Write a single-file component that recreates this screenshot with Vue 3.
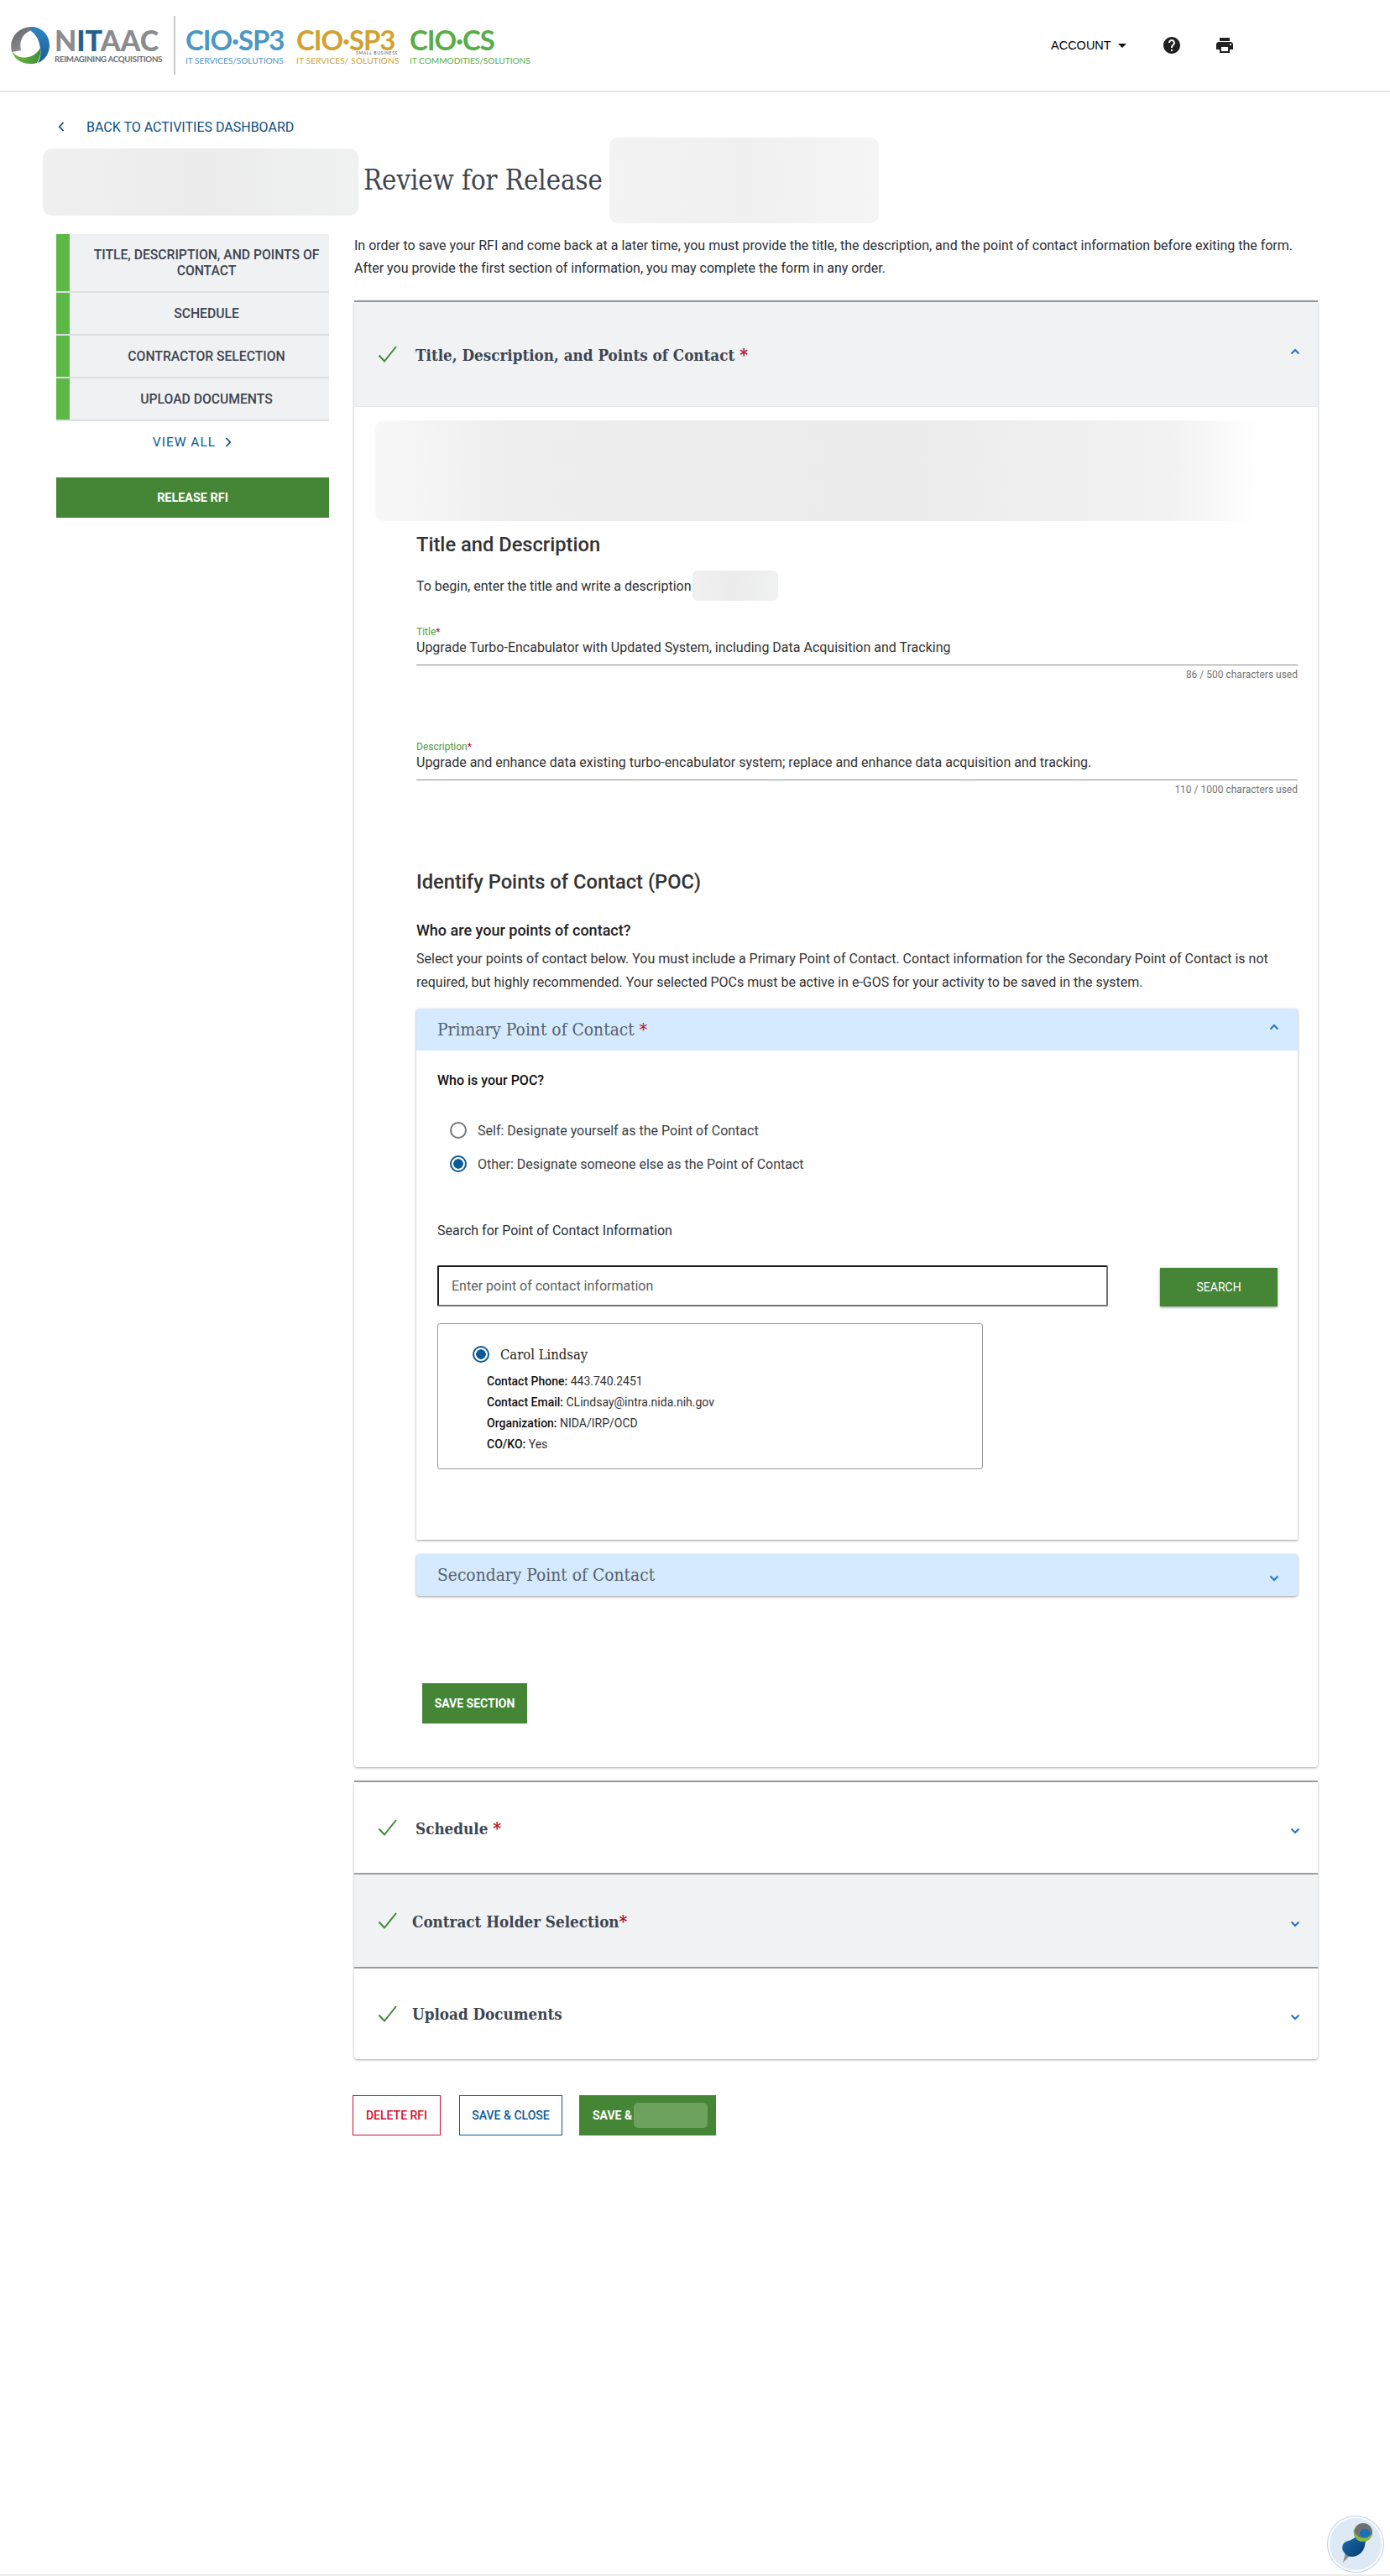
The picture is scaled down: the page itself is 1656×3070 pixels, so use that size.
<template>
  <div class="page">
    <header class="topbar">
      <div class="logo">
        <svg class="swirl" viewBox="0 0 46 44" width="46" height="44">
          <defs>
            <linearGradient id="swGrey" x1="0" y1="0" x2="1" y2="1">
              <stop offset="0" stop-color="#5f6062" />
              <stop offset="1" stop-color="#a5a6a8" />
            </linearGradient>
            <linearGradient id="swBlue" x1="0" y1="0" x2="0" y2="1">
              <stop offset="0" stop-color="#2f86c4" />
              <stop offset="1" stop-color="#1c5d92" />
            </linearGradient>
            <linearGradient id="swGreen" x1="0" y1="0" x2="1" y2="0">
              <stop offset="0" stop-color="#78b944" />
              <stop offset="1" stop-color="#3f8f3a" />
            </linearGradient>
          </defs>
          <path d="M1 30C-3 13 9 0 25 0c3 0 7 1 10 3-9-1-18 3-22 11-2 5-2 9-1 14z" fill="url(#swGrey)" />
          <path d="M22 0c14-1 24 9 24 22 0 10-6 18-14 21 3-5 4-11 3-17-1-9-4-16-11-21-1-2-1-4-2-5z" fill="url(#swBlue)" />
          <path d="M1 28c5 9 15 10 23 7 5-2 9-6 11-10 1 7-1 13-4 18-3 1-5 1-8 1C12 44 3 38 1 28z" fill="url(#swGreen)" />
          <ellipse cx="21.5" cy="22" rx="9.5" ry="10" fill="#fff" />
        </svg>
        <div class="nitaac">
          <span class="nitaac-name">N<b>IT</b>AAC</span>
          <span class="nitaac-tag">REIMAGINING ACQUISITIONS</span>
        </div>
        <span class="logo-rule"></span>
        <div v-for="b in brands" :key="b.sub" class="brand" :class="b.cls">
          <span class="brand-name">{{ b.name }}</span>
          <span v-if="b.small" class="brand-small">SMALL BUSINESS</span>
          <span class="brand-sub">{{ b.sub }}</span>
        </div>
      </div>
      <nav class="topnav">
        <span class="account">ACCOUNT</span>
        <span class="caret"></span>
        <svg class="help" viewBox="0 0 24 24" width="24" height="24"><path d="M12 2C6.48 2 2 6.48 2 12s4.48 10 10 10 10-4.48 10-10S17.52 2 12 2zm1 17h-2v-2h2v2zm2.07-7.75l-.9.92C13.45 12.9 13 13.5 13 15h-2v-.5c0-1.1.45-2.1 1.17-2.83l1.24-1.26c.37-.36.59-.86.59-1.41 0-1.1-.9-2-2-2s-2 .9-2 2H8c0-2.21 1.79-4 4-4s4 1.79 4 4c0 .88-.36 1.68-.93 2.25z" /></svg>
        <svg class="print" viewBox="0 0 24 24" width="24" height="24"><path d="M19 8H5c-1.66 0-3 1.34-3 3v6h4v4h12v-4h4v-6c0-1.66-1.34-3-3-3zm-3 11H8v-5h8v5zm3-7c-.55 0-1-.45-1-1s.45-1 1-1 1 .45 1 1-.45 1-1 1zm-1-9H6v4h12V3z" /></svg>
      </nav>
    </header>

    <a class="back">
      <svg viewBox="0 0 10 14" width="10" height="14"><path d="M7.5 2L2.8 7l4.7 5" fill="none" stroke="#0b4f85" stroke-width="1.8" /></svg>
      <span>BACK TO ACTIVITIES DASHBOARD</span>
    </a>

    <div class="title-row">
      <div class="blur blur-left"></div>
      <h1>Review for Release</h1>
      <div class="blur blur-right"></div>
    </div>

    <div class="columns">
      <aside class="sidebar">
        <div v-for="item in navItems" :key="item.label" class="nav-item" :class="{tall: item.tall}">
          <span>{{ item.label }}</span>
        </div>
        <a class="view-all">
          <span>VIEW ALL</span>
          <svg viewBox="0 0 10 14" width="10" height="14"><path d="M2.5 2l4.7 5-4.7 5" fill="none" stroke="#0b4f85" stroke-width="1.8" /></svg>
        </a>
        <button class="btn-green release">RELEASE RFI</button>
      </aside>

      <main class="content">
        <p class="intro">
          In order to save your RFI and come back at a later time, you must provide the title, the description, and the point of contact information before exiting the form.<br />
          After you provide the first section of information, you may complete the form in any order.
        </p>

        <section class="card">
          <div class="acc-head open">
            <svg class="check" viewBox="0 0 24 22" width="24" height="22"><path d="M1.5 12.5l6.5 7L22 2" fill="none" stroke="#43863a" stroke-width="2" /></svg>
            <h2 class="acc-title first">Title, Description, and Points of Contact <em>*</em></h2>
            <svg class="chev up" viewBox="0 0 12 8" width="12" height="8"><path d="M1.5 6.5L6 2l4.5 4.5" fill="none" stroke="#2176c7" stroke-width="2" /></svg>
          </div>

          <div class="blur blur-notice"></div>

          <div class="form">
            <h3 class="h-lg">Title and Description</h3>
            <div class="begin">
              <span>To begin, enter the title and write a description</span>
              <div class="blur blur-inline"></div>
            </div>

            <div class="field first-field">
              <label>Title<em>*</em></label>
              <div class="value">Upgrade Turbo-Encabulator with Updated System, including Data Acquisition and Tracking</div>
              <div class="counter">86 / 500 characters used</div>
            </div>
            <div class="field second-field">
              <label>Description<em>*</em></label>
              <div class="value">Upgrade and enhance data existing turbo-encabulator system; replace and enhance data acquisition and tracking.</div>
              <div class="counter">110 / 1000 characters used</div>
            </div>

            <h3 class="h-lg poc-title">Identify Points of Contact (POC)</h3>
            <h4 class="h-md">Who are your points of contact?</h4>
            <p class="poc-text">
              Select your points of contact below. You must include a Primary Point of Contact. Contact information for the Secondary Point of Contact is not required, but highly recommended. Your selected POCs must be active in e-GOS for your activity to be saved in the system.
            </p>

            <div class="panel">
              <div class="panel-head">
                <span>Primary Point of Contact <em>*</em></span>
                <svg class="chev up" viewBox="0 0 12 8" width="12" height="8"><path d="M1.5 6.5L6 2l4.5 4.5" fill="none" stroke="#2176c7" stroke-width="2" /></svg>
              </div>
              <div class="panel-body">
                <div class="who">Who is your POC?</div>
                <div class="radio-row first-radio">
                  <span class="radio"></span>
                  <span>Self: Designate yourself as the Point of Contact</span>
                </div>
                <div class="radio-row">
                  <span class="radio on"></span>
                  <span>Other: Designate someone else as the Point of Contact</span>
                </div>
                <div class="search-label">Search for Point of Contact Information</div>
                <div class="search-row">
                  <div class="search-input">Enter point of contact information</div>
                  <button class="btn-green search">SEARCH</button>
                </div>
                <div class="contact">
                  <div class="contact-name">
                    <span class="radio on"></span>
                    <span>Carol Lindsay</span>
                  </div>
                  <div v-for="row in contactRows" :key="row.k" class="contact-row">
                    <b>{{ row.k }}:</b> {{ row.v }}
                  </div>
                </div>
              </div>
            </div>

            <div class="panel-head closed">
              <span>Secondary Point of Contact</span>
              <svg class="chev down" viewBox="0 0 12 8" width="12" height="8"><path d="M1.5 1.5L6 6l4.5-4.5" fill="none" stroke="#2176c7" stroke-width="2" /></svg>
            </div>

            <button class="btn-green save-section">SAVE SECTION</button>
          </div>
        </section>

        <section class="card rows">
          <div v-for="s in sections" :key="s.title" class="acc-head" :class="s.cls">
            <svg class="check" viewBox="0 0 24 22" width="24" height="22"><path d="M1.5 12.5l6.5 7L22 2" fill="none" stroke="#43863a" stroke-width="2" /></svg>
            <h2 class="acc-title">{{ s.title }}<em v-if="s.star">{{ s.star }}</em></h2>
            <svg class="chev down" viewBox="0 0 12 8" width="12" height="8"><path d="M1.5 1.5L6 6l4.5-4.5" fill="none" stroke="#2176c7" stroke-width="2" /></svg>
          </div>
        </section>

        <div class="actions">
          <button class="btn-line red">DELETE RFI</button>
          <button class="btn-line blue">SAVE &amp; CLOSE</button>
          <button class="btn-green save-next"><span>SAVE &amp;</span><i class="blur-btn"></i></button>
        </div>
      </main>
    </div>

    <div class="pin">
      <svg viewBox="0 0 68 68" width="68" height="68">
        <defs>
          <linearGradient id="pinBody" x1="0" y1="0" x2="1" y2="1">
            <stop offset="0" stop-color="#1c6fb3" />
            <stop offset="1" stop-color="#063a6b" />
          </linearGradient>
        </defs>
        <path d="M22 44l-3 12 9-9z" fill="#8f9294" />
        <path d="M35 24l11 6c-1 5-1 8-3 11-3 6-12 10-18 7-6-3-9-10-5-15 3-4 10-2 15-9z" fill="url(#pinBody)" />
        <circle cx="43" cy="20" r="11" fill="#6f7072" />
        <path d="M32 16c0 6 6 11 12 11 4 0 7-2 10-6-1 7-6 10-12 10-7 0-12-8-10-15z" fill="#86bc45" />
        <ellipse cx="45" cy="21" rx="6" ry="5" fill="#1472b8" />
      </svg>
    </div>
  </div>
</template>

<script setup>
const brands = [
  {name: 'CIO·SP3', sub: 'IT SERVICES/SOLUTIONS', cls: 'sp3'},
  {name: 'CIO·SP3', sub: 'IT SERVICES/ SOLUTIONS', cls: 'sb', small: true},
  {name: 'CIO·CS', sub: 'IT COMMODITIES/SOLUTIONS', cls: 'cs'},
];

const navItems = [
  {label: 'TITLE, DESCRIPTION, AND POINTS OF CONTACT', tall: true},
  {label: 'SCHEDULE'},
  {label: 'CONTRACTOR SELECTION'},
  {label: 'UPLOAD DOCUMENTS'},
];

const contactRows = [
  {k: 'Contact Phone', v: '443.740.2451'},
  {k: 'Contact Email', v: 'CLindsay@intra.nida.nih.gov'},
  {k: 'Organization', v: 'NIDA/IRP/OCD'},
  {k: 'CO/KO', v: 'Yes'},
];

const sections = [
  {title: 'Schedule ', star: '*', cls: 'r-schedule'},
  {title: 'Contract Holder Selection', star: '*', cls: 'r-holder'},
  {title: 'Upload Documents', cls: 'r-upload'},
];
</script>

<style>
html,
body {
  margin: 0;
  background: #fff;
}
</style>

<style scoped>
.page {
  position: relative;
  width: 1656px;
  height: 3070px;
  overflow: hidden;
  font-family: Roboto, 'Liberation Sans', sans-serif;
  font-size: 16px;
  color: #3d4551;
  box-sizing: border-box;
  border-bottom: 2px solid #ececec;
}
em {
  font-style: normal;
  color: #b50d2b;
}

/* header */
.topbar {
  height: 108px;
  border-bottom: 2px solid #e3e3e3;
  display: flex;
  align-items: center;
  box-sizing: content-box;
}
.logo {
  display: flex;
  align-items: center;
  padding-left: 13px;
  width: 1239px;
  box-sizing: border-box;
}
.swirl {
  flex: none;
}
.nitaac {
  display: flex;
  flex-direction: column;
  margin-left: 6px;
  width: 128px;
  color: #8a8c8f;
  font-family: Lato, sans-serif;
}
.nitaac-name {
  font-size: 34px;
  line-height: 30px;
  font-weight: 900;
  letter-spacing: 0;
}
.nitaac-name b {
  font-weight: 900;
  color: #235f8f;
}
.nitaac-tag {
  font-size: 9.7px;
  line-height: 12px;
  margin-top: 1px;
  white-space: nowrap;
  font-weight: 700;
  color: #6d6e71;
  letter-spacing: -0.3px;
}
.logo-rule {
  width: 2px;
  height: 70px;
  background: #c9c9c9;
  margin: 0 12px 0 14px;
}
.brand {
  position: relative;
  display: flex;
  flex-direction: column;
  margin-right: 13px;
  font-family: Lato, sans-serif;
  white-space: nowrap;
}
.brand-name {
  font-size: 33px;
  line-height: 34px;
  font-weight: 700;
  letter-spacing: -1.1px;
}
.brand-sub {
  font-size: 10.2px;
  line-height: 12px;
  margin-top: 2px;
  letter-spacing: -0.05px;
}
.brand-small {
  position: absolute;
  right: 1px;
  top: 30px;
  font-size: 5px;
  line-height: 6px;
  letter-spacing: 0.7px;
  color: #555;
}
.sp3 {
  width: 119px;
  color: #4b97c5;
}
.sb {
  width: 122px;
  color: #d1a22f;
}
.sb .brand-sub {
  letter-spacing: 0.1px;
}
.cs {
  color: #57ae47;
}
.topnav {
  display: flex;
  align-items: center;
  color: #000;
}
.account {
  font-family: 'Liberation Sans', sans-serif;
  font-size: 14.5px;
  margin-left: 13px;
}
.caret {
  width: 0;
  height: 0;
  margin: 0 0 0 8px;
  border-left: 5px solid transparent;
  border-right: 5px solid transparent;
  border-top: 5px solid #111;
}
.help {
  margin-left: 42px;
  fill: #212121;
}
.print {
  margin-left: 39px;
  fill: #212121;
}

/* title area */
.back {
  display: flex;
  align-items: center;
  height: 20px;
  margin: 31px 0 0 68px;
  gap: 25px;
  color: #0b4f85;
  font-size: 16px;
}
.title-row {
  display: flex;
  align-items: center;
  height: 102px;
  margin-top: 3px;
  padding-left: 51px;
}
.blur {
  border-radius: 10px;
  background: linear-gradient(90deg, #f0f0f0, #ececec 50%, #f0f1f1);
}
.blur-left {
  width: 376px;
  height: 80px;
  margin-top: 4px;
}
h1 {
  margin: 0 7px 0 6px;
  width: 286px;
  white-space: nowrap;
  font-family: 'DejaVu Serif Condensed', 'DejaVu Serif', serif;
  font-weight: 400;
  font-size: 32.6px;
  color: #3d4551;
}
.blur-right {
  width: 321px;
  height: 102px;
  background: linear-gradient(90deg, #f3f3f3, #f0f0f0 50%, #f5f5f5);
}

/* layout */
.columns {
  display: grid;
  grid-template-columns: 325px 1148px;
  column-gap: 30px;
  padding: 13px 0 0 67px;
}
.nav-item {
  display: flex;
  align-items: center;
  justify-content: center;
  text-align: center;
  height: 49px;
  margin-bottom: 2px;
  padding-left: 18px;
  padding-right: 1px;
  background: #f0f1f3;
  border-left: 16px solid #5cb946;
  box-shadow: 0 2px 0 #dcdee0;
  font-weight: 500;
  font-size: 15.7px;
  line-height: 19px;
  color: #3d4551;
}
.nav-item.tall {
  height: 68px;
}
.view-all {
  display: flex;
  align-items: center;
  justify-content: center;
  gap: 10px;
  height: 24px;
  margin-top: 15px;
  color: #0b5a91;
  letter-spacing: 1px;
  font-size: 15.5px;
}
.btn-green {
  border: none;
  background: #448635;
  color: #fff;
  font-family: Roboto, sans-serif;
  padding: 0;
}
.release {
  width: 325px;
  height: 48px;
  margin-top: 30px;
  display: block;
  font-weight: 700;
  font-size: 14.4px;
}
.intro {
  margin: 0;
  font-size: 16px;
  line-height: 27px;
  height: 54px;
  letter-spacing: -0.005px;
  color: #2b2f36;
  white-space: nowrap;
}

/* accordions */
.card {
  margin-top: 25px;
  background: #fff;
  border-radius: 4px;
  box-shadow: 0 1px 3px rgba(0, 0, 0, 0.35);
}
.acc-head {
  display: flex;
  align-items: center;
  box-sizing: border-box;
  border-top: 2px solid #9a9c9e;
  padding: 0 21px 0 28px;
}
.acc-head.open {
  height: 127px;
  background: #f0f2f4;
  border-top-color: #8c99a5;
  border-bottom: 1px solid #e1e8f0;
}
.acc-title {
  margin: 0;
  flex: 1;
  font-family: 'DejaVu Serif Condensed', 'DejaVu Serif', serif;
  font-size: 18.7px;
  font-weight: 700;
  color: #3d4551;
}
.check {
  flex: none;
  margin-right: 21px;
}
.chev.up {
  margin-bottom: 6px;
}
.chev.down {
  margin-top: 8px;
}
.acc-title em {
  font-size: 21px;
}
.blur-notice {
  width: 1053px;
  height: 120px;
  margin: 16px 0 0 25px;
  background: linear-gradient(90deg, #f8f8f8, #eeeeee 15%, #ececec 60%, #f2f2f2 90%, #fff);
}
.form {
  padding: 14px 24px 52px 74px;
}
.h-lg {
  margin: 0;
  font-size: 23.7px;
  line-height: 28px;
  font-weight: 500;
  color: #333;
}
.begin {
  display: flex;
  align-items: center;
  height: 36px;
  margin-top: 17px;
  color: #2b2f36;
}
.blur-inline {
  width: 102px;
  height: 36px;
  margin-left: 1px;
  border-radius: 6px;
}
.field label {
  display: block;
  font-size: 12px;
  line-height: 16px;
  color: #4e9a3f;
}
.first-field {
  margin-top: 29px;
}
.second-field {
  margin-top: 70px;
}
.value {
  font-size: 16px;
  line-height: 20px;
  padding: 1px 0 10px;
  border-bottom: 1px solid #8c8c8c;
  color: #333;
}
.counter {
  font-size: 12px;
  line-height: 16px;
  margin-top: 3px;
  text-align: right;
  color: #757575;
}
.poc-title {
  margin-top: 87px;
  line-height: 30px;
}
.h-md {
  margin: 31px 0 0;
  font-size: 18px;
  line-height: 24px;
  font-weight: 500;
  color: #222;
}
.poc-text {
  margin: 8px 0 0;
  line-height: 27.5px;
  color: #333;
}
.panel {
  margin-top: 18px;
  border-radius: 4px 4px 0 0;
  box-shadow: 0 1px 3px rgba(0, 0, 0, 0.4);
}
.panel-head {
  display: flex;
  align-items: center;
  justify-content: space-between;
  height: 50px;
  padding: 0 22px 0 25px;
  background: #d5eafe;
  border-radius: 4px 4px 0 0;
  font-family: 'DejaVu Serif Condensed', 'DejaVu Serif', serif;
  font-size: 20.8px;
  color: #56626d;
}
.panel-head.closed {
  margin-top: 17px;
  border-radius: 4px;
  box-shadow: 0 1px 3px rgba(0, 0, 0, 0.4);
}
.panel-body {
  padding: 26px 24px 84px 25px;
}
.who {
  font-weight: 500;
  font-size: 16px;
  line-height: 20px;
  color: #111;
}
.radio-row {
  display: flex;
  align-items: center;
  height: 40px;
  padding-left: 15px;
  gap: 13px;
  color: #3a3f47;
}
.first-radio {
  margin-top: 29px;
}
.radio {
  flex: none;
  box-sizing: border-box;
  width: 20px;
  height: 20px;
  border-radius: 50%;
  border: 2px solid #767676;
  background: #fff;
}
.radio.on {
  border-color: #0b5a9a;
  background: radial-gradient(circle, #0b5a9a 0 5.5px, #fff 6px);
}
.search-label {
  margin-top: 50px;
  line-height: 20px;
  color: #2b2f36;
}
.search-row {
  display: flex;
  align-items: flex-end;
  margin-top: 31px;
  gap: 62px;
}
.search-input {
  box-sizing: border-box;
  width: 800px;
  height: 49px;
  display: flex;
  align-items: center;
  padding-left: 15px;
  border: 2px solid;
  border-color: #1b1b1b #757575 #757575 #1b1b1b;
  border-radius: 2px;
  color: #5c5f64;
}
.search {
  width: 140px;
  height: 46px;
  font-size: 14px;
  box-shadow: 0 1px 3px rgba(0, 0, 0, 0.4);
}
.contact {
  box-sizing: border-box;
  width: 650px;
  height: 174px;
  margin-top: 20px;
  padding: 24px 0 0 41px;
  border: 1px solid #9a9a9a;
  border-radius: 3px;
}
.contact-name {
  display: flex;
  align-items: center;
  gap: 13px;
  height: 24px;
  margin-bottom: 8px;
  font-family: 'DejaVu Serif Condensed', 'DejaVu Serif', serif;
  font-size: 16.5px;
  color: #222;
}
.contact-row {
  margin-left: 17px;
  font-size: 14px;
  line-height: 25px;
  color: #333;
}
.contact-row b {
  font-weight: 500;
  color: #111;
}
.save-section {
  display: block;
  width: 125px;
  height: 48px;
  margin: 104px 0 0 7px;
  font-weight: 700;
  font-size: 14px;
}

/* collapsed rows */
.rows {
  margin-top: 16px;
}
.r-schedule {
  height: 110px;
}
.r-holder {
  height: 112px;
  background: #f0f2f4;
}
.r-upload {
  height: 110px;
}
.r-holder .check,
.r-upload .check {
  margin-right: 17px;
}
.actions {
  display: flex;
  margin: 43px 0 0 -2px;
  height: 48px;
}
.btn-line {
  box-sizing: border-box;
  height: 48px;
  background: #fff;
  font-family: Roboto, sans-serif;
  font-weight: 500;
  font-size: 14px;
  padding: 0;
}
.btn-line.red {
  width: 105px;
  border: 1px solid #d2112f;
  color: #d2112f;
}
.btn-line.blue {
  width: 123px;
  margin-left: 22px;
  border: 1px solid #0b5a9a;
  color: #0b5a9a;
}
.save-next {
  display: flex;
  align-items: center;
  width: 163px;
  height: 48px;
  margin-left: 20px;
  padding-left: 16px;
  font-weight: 700;
  font-size: 14px;
}
.blur-btn {
  width: 88px;
  height: 30px;
  margin-left: 2px;
  border-radius: 5px;
  background: #6ca15e;
}

/* floating pin */
.pin {
  position: absolute;
  right: 7px;
  bottom: 2px;
  width: 68px;
  height: 68px;
  box-sizing: border-box;
  border-radius: 50%;
  background: #dde9f4;
  box-shadow: inset 0 0 0 1px #b7d3f5, inset 0 0 0 3px #fff;
}
</style>
